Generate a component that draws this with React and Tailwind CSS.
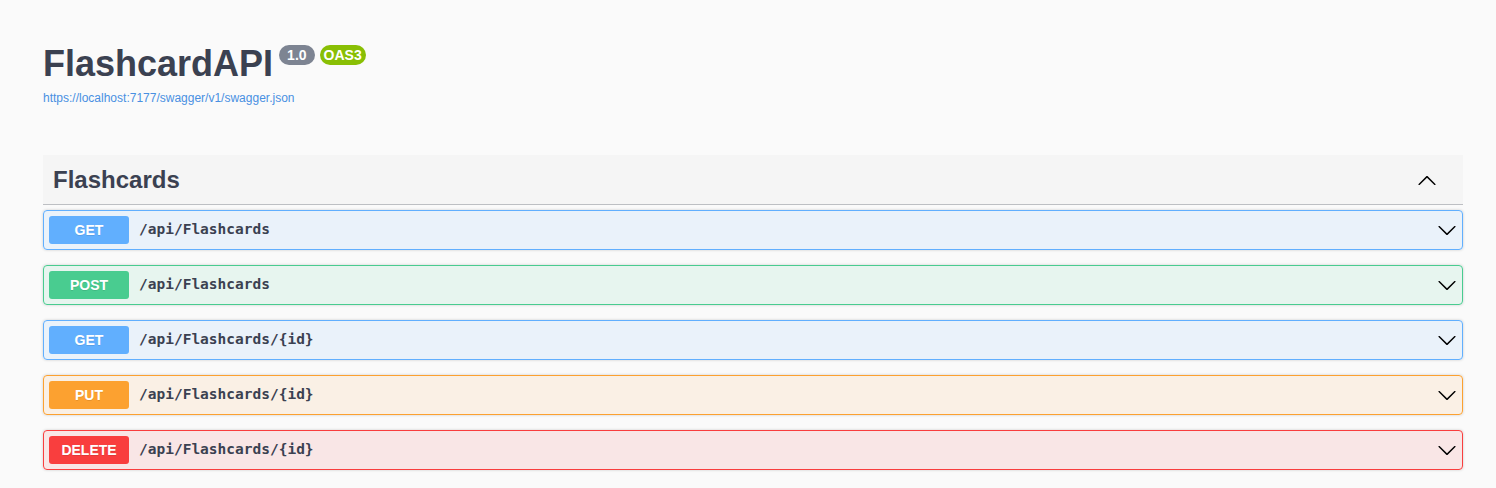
import React from "react";

const ops = [
  { method: "GET", path: "/api/Flashcards", color: "bg-[#61affe]", border: "border-[#61affe]", tint: "bg-[#61affe]/10" },
  { method: "POST", path: "/api/Flashcards", color: "bg-[#49cc90]", border: "border-[#49cc90]", tint: "bg-[#49cc90]/10" },
  { method: "GET", path: "/api/Flashcards/{id}", color: "bg-[#61affe]", border: "border-[#61affe]", tint: "bg-[#61affe]/10" },
  { method: "PUT", path: "/api/Flashcards/{id}", color: "bg-[#fca130]", border: "border-[#fca130]", tint: "bg-[#fca130]/10" },
  { method: "DELETE", path: "/api/Flashcards/{id}", color: "bg-[#f93e3e]", border: "border-[#f93e3e]", tint: "bg-[#f93e3e]/10" },
];

const ArrowDown = () => (
  <svg width="20" height="20" viewBox="0 0 20 20" className="shrink-0">
    <path d="M17.418 6.109c.272-.268.709-.268.979 0s.271.701 0 .969l-7.908 7.83c-.27.268-.707.268-.979 0l-7.908-7.83c-.27-.268-.27-.701 0-.969.271-.268.709-.268.979 0L10 13.25l7.418-7.141z" />
  </svg>
);

const ArrowUp = () => (
  <svg width="20" height="20" viewBox="0 0 20 20" className="shrink-0">
    <path d="M17.418 14.908c.272.268.709.268.979 0s.271-.701 0-.969l-7.908-7.83c-.27-.268-.707-.268-.979 0l-7.908 7.830c-.27.268-.27.701 0 .969.271.268.709.268.979 0L10 7.767l7.418 7.141z" />
  </svg>
);

export default function App() {
  return (
    <div className="min-h-screen bg-[#fafafa] font-['Liberation_Sans',Arial,sans-serif] text-[#3b4151]">
      <div className="pl-[43px] pr-[33px]">
        {/* info */}
        <div className="pt-[40px] pb-[50px]">
          <div className="mb-[3px] flex items-start">
            <h2 className="text-[36px] font-bold leading-[48px] text-[#3b4151]">FlashcardAPI</h2>
            <span className="ml-[6px] mt-[5px] rounded-full bg-[#7d8492] px-[8px] py-[2px] text-[14px] font-bold leading-[16px] text-white">
              1.0
            </span>
            <span className="ml-[5px] mt-[5px] rounded-full bg-[#89bf04] px-[4px] py-[2px] text-[14px] font-bold leading-[16px] text-white">
              OAS3
            </span>
          </div>
          <a href="#" className="block text-[12px] leading-[14px] text-[#4990e2]">
            https://localhost:7177/swagger/v1/swagger.json
          </a>
        </div>

        {/* tag section */}
        <div className="mb-[5px] flex h-[50px] items-center justify-between border-b border-[#3b4151]/30 bg-[#f5f5f5] pl-[10px] pr-[26px]">
          <h3 className="text-[24px] font-bold text-[#3b4151]">Flashcards</h3>
          <ArrowUp />
        </div>

        <div className="flex flex-col gap-[15px]">
          {ops.map((op, i) => (
            <div
              key={i}
              className={`flex h-[40px] items-center rounded-[4px] border ${op.border} ${op.tint} px-[5px] shadow-[0_0_3px_rgba(0,0,0,0.19)]`}
            >
              <span
                className={`${op.color} mr-[10px] flex h-[28px] w-[80px] items-center justify-center rounded-[3px] text-[14px] font-bold text-white [text-shadow:0_1px_0_rgba(0,0,0,0.1)]`}
              >
                {op.method}
              </span>
              <span className="flex-1 font-['DejaVu_Sans_Mono',monospace] text-[14.5px] font-bold text-[#3b4151]">
                {op.path}
              </span>
              <ArrowDown />
            </div>
          ))}
        </div>
      </div>
    </div>
  );
}
